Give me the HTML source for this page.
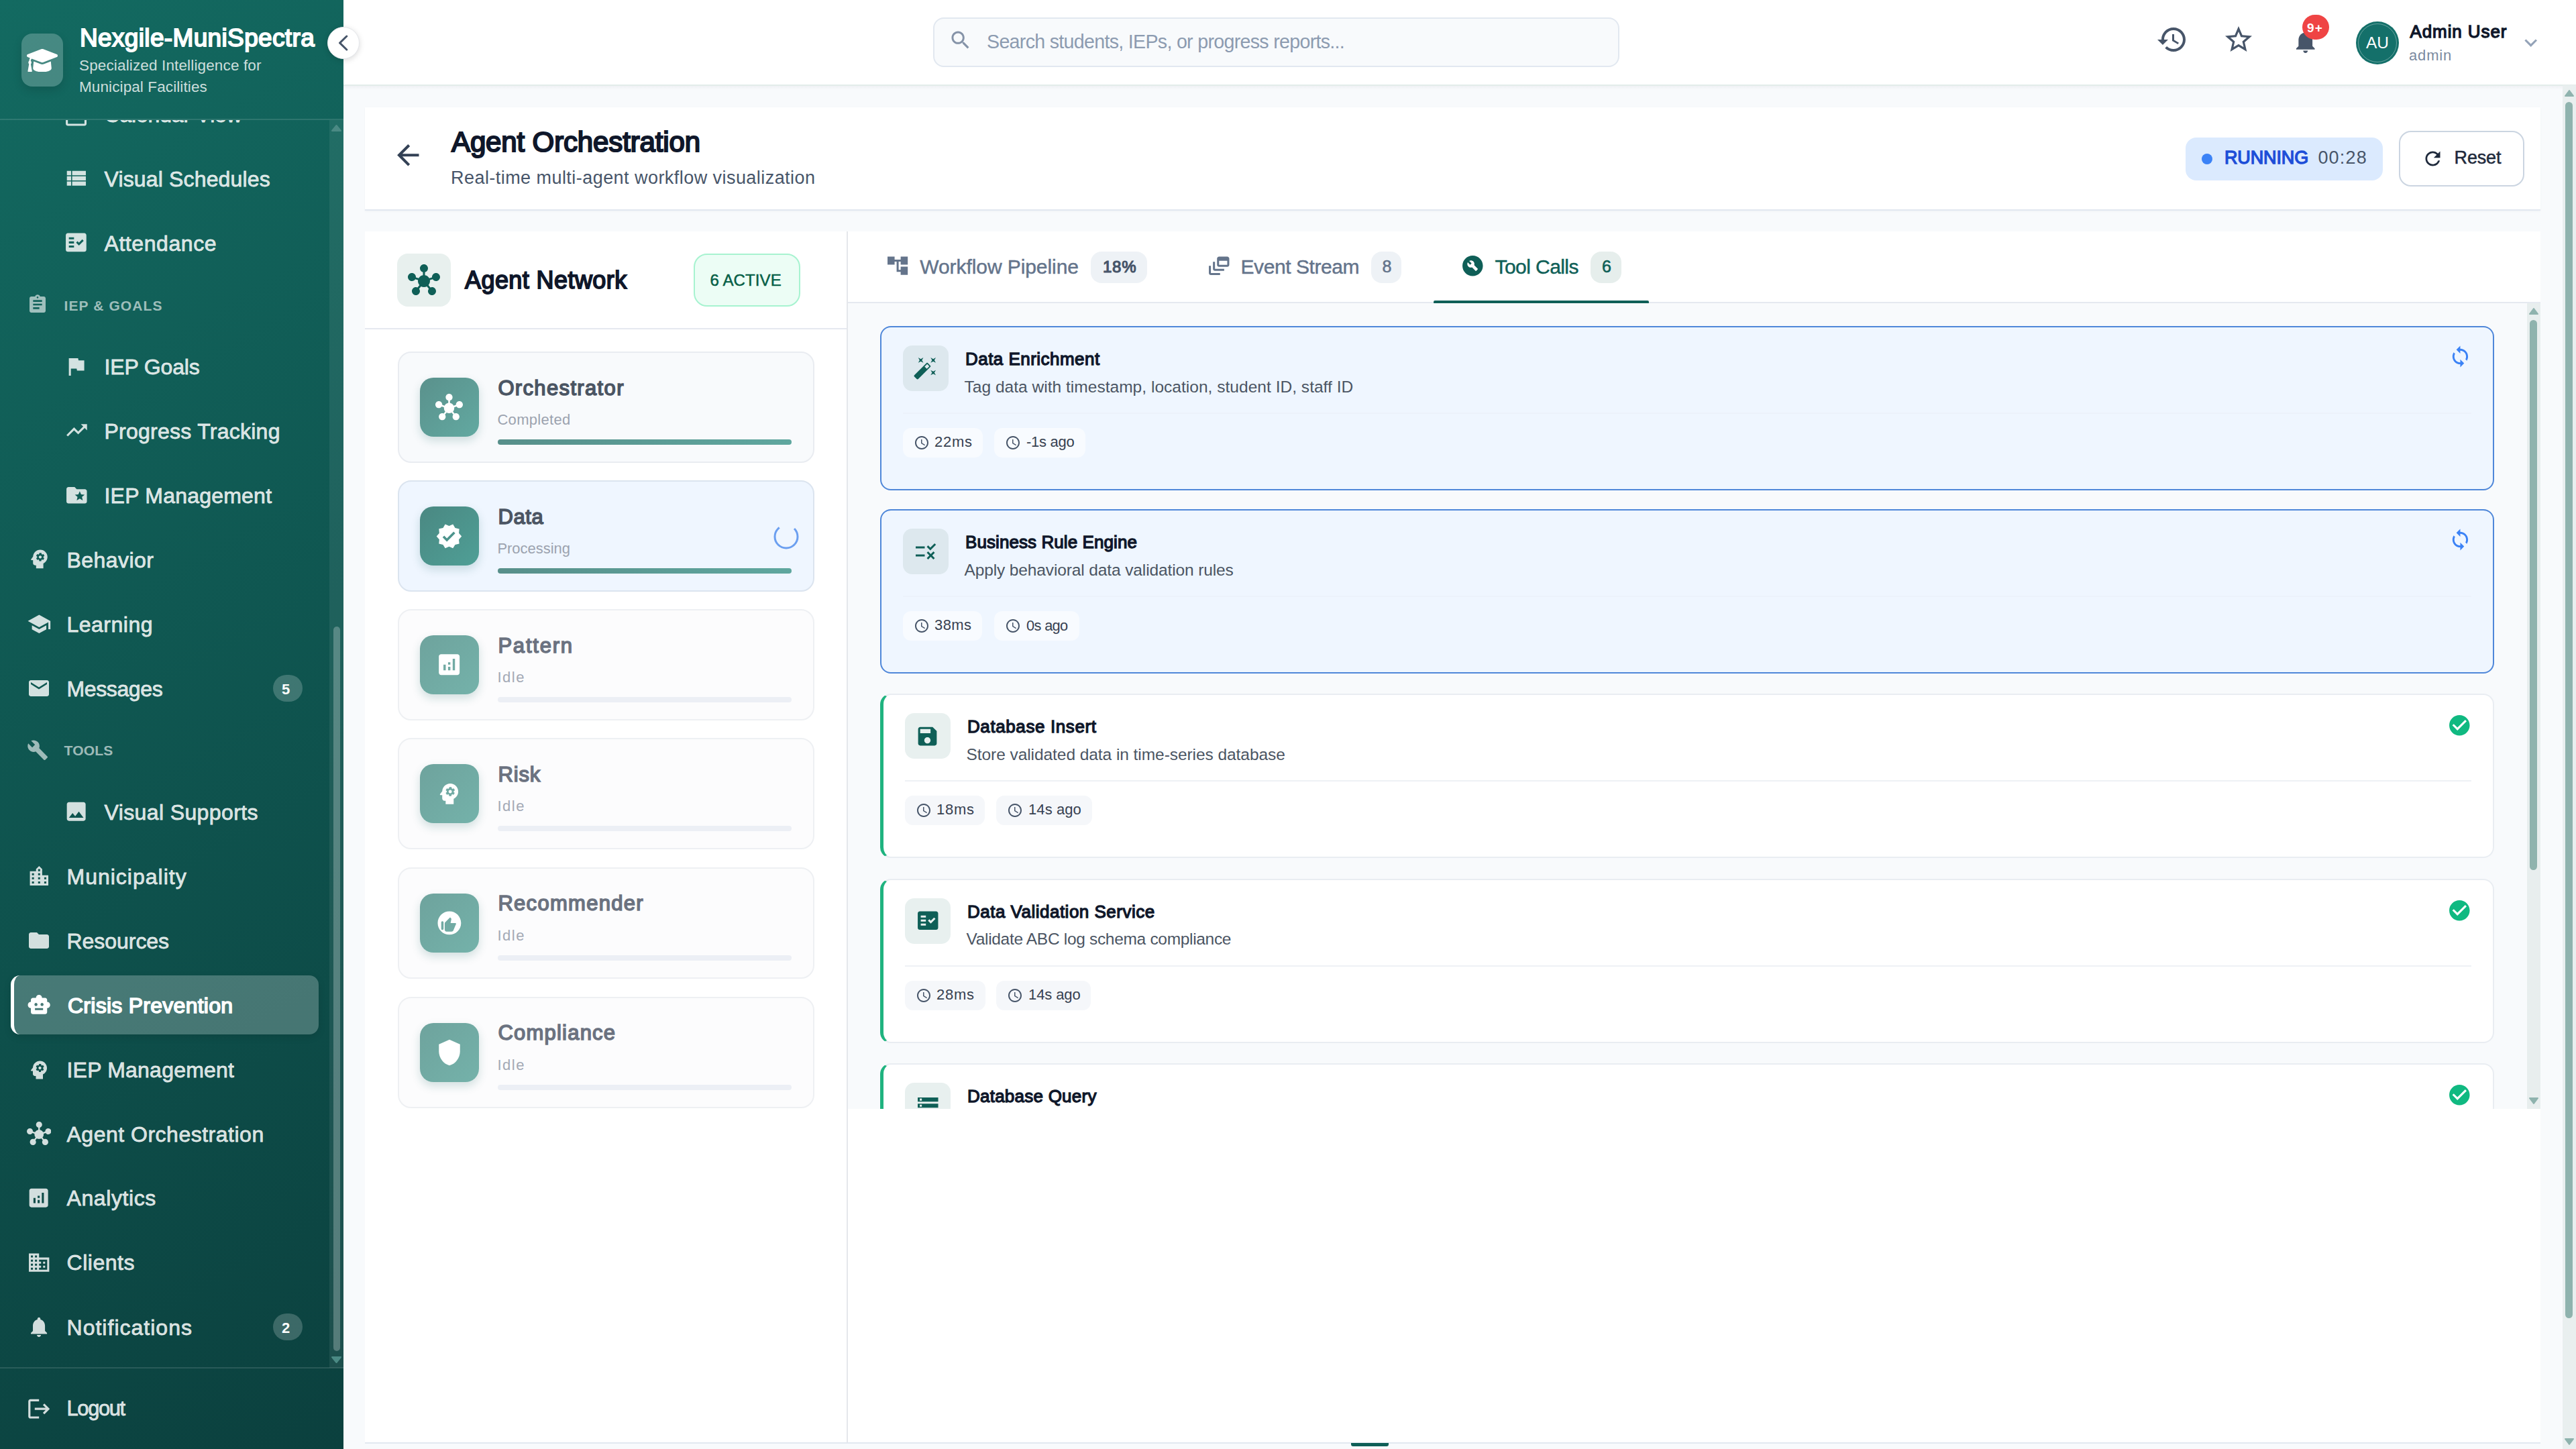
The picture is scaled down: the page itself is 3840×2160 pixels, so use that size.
<!DOCTYPE html>
<html><head><meta charset="utf-8"><title>Agent Orchestration</title>
<style>
html,body{margin:0;padding:0;width:3840px;height:2160px;overflow:hidden;background:#f8fafc;font-family:"Liberation Sans", sans-serif;}
*{font-family:"Liberation Sans", sans-serif;}
</style></head><body>
<div style="position:absolute;left:0.0px;top:0.0px;width:512.0px;height:2160.0px;background:linear-gradient(150deg,#136a61 0%,#0b403e 100%);"></div>
<div style="position:absolute;left:0.0px;top:177.0px;width:512.0px;height:2.0px;background:rgba(255,255,255,0.12);"></div>
<div style="position:absolute;left:32.0px;top:50.0px;width:62.0px;height:79.0px;background:rgba(255,255,255,0.22);border-radius:16px;box-shadow:0 6px 14px rgba(0,0,0,0.12);"></div>
<svg style="position:absolute;left:40px;top:72.5px" width="46" height="34.5" viewBox="0 64 640 384" preserveAspectRatio="none"><path fill="#ffffff" d="M622.34 153.2L343.4 67.5c-15.2-4.67-31.6-4.67-46.79 0L17.66 153.2c-23.54 7.23-23.54 38.36 0 45.59l48.63 14.94c-10.67 13.19-17.230 29.28-17.88 46.9C38.78 266.15 32 276.11 32 288c0 10.780 5.68 19.85 13.86 25.65L20.33 428.53C18.11 438.52 25.71 448 35.94 448h56.11c10.24 0 17.84-9.48 15.62-19.47L82.14 313.65C90.32 307.85 96 298.78 96 288c0-11.57-6.47-21.25-15.66-26.87.76-15.020 8.44-28.3 20.69-36.72L296.6 284.5c9.06 2.78 26.44 6.25 46.79 0l278.95-85.7c23.55-7.24 23.55-38.36 0-45.6zM352.79 315.09c-28.53 8.76-52.84 3.92-65.59 0l-145.02-44.55L128 384c0 35.35 85.96 64 192 64s192-28.65 192-64l-14.18-113.47-145.03 44.560z"/></svg>
<span id="t1" style="position:absolute;left:119.0px;top:38.2px;font-size:37.00px;line-height:37.00px;font-weight:400;color:#ffffff;white-space:nowrap;letter-spacing:0.350px;-webkit-text-stroke:1.85px #ffffff;">Nexgile-MuniSpectra</span>
<span id="t2" style="position:absolute;left:118.0px;top:86.9px;font-size:22.50px;line-height:22.50px;font-weight:400;color:rgba(255,255,255,0.8);white-space:nowrap;letter-spacing:0.142px;">Specialized Intelligence for</span>
<span id="t3" style="position:absolute;left:118.0px;top:118.6px;font-size:22.50px;line-height:22.50px;font-weight:400;color:rgba(255,255,255,0.8);white-space:nowrap;letter-spacing:0.102px;">Municipal Facilities</span>
<div style="position:absolute;left:0;top:179px;width:512px;height:1860px;overflow:hidden;">
<span id="t4" style="position:absolute;left:155.5px;top:-23.8px;font-size:32.00px;line-height:32.00px;font-weight:400;color:rgba(255,255,255,0.82);white-space:nowrap;letter-spacing:-0.185px;-webkit-text-stroke:0.8px rgba(255,255,255,0.82);">Calendar View</span>
<svg style="position:absolute;left:95.2px;top:-27.5px;" width="37.1" height="37.1" viewBox="0 0 24 24"><path fill="rgba(255,255,255,0.82)" d="M20 3h-1V1h-2v2H7V1H5v2H4c-1.1 0-2 .9-2 2v16c0 1.1.9 2 2 2h16c1.1 0 2-.9 2-2V5c0-1.1-.9-2-2-2zm0 18H4V8h16v13z"/></svg>
<span id="t5" style="position:absolute;left:155.5px;top:72.2px;font-size:32.00px;line-height:32.00px;font-weight:400;color:rgba(255,255,255,0.82);white-space:nowrap;letter-spacing:0.153px;-webkit-text-stroke:0.8px rgba(255,255,255,0.82);">Visual Schedules</span>
<svg style="position:absolute;left:95.1px;top:68.1px;" width="37.7" height="37.7" viewBox="0 0 24 24"><path fill="rgba(255,255,255,0.82)" d="M3 14h4v-4H3v4zm0 5h4v-4H3v4zM3 9h4V5H3v4zm5 5h13v-4H8v4zm0 5h13v-4H8v4zM8 5v4h13V5H8z"/></svg>
<span id="t6" style="position:absolute;left:155.5px;top:168.3px;font-size:32.00px;line-height:32.00px;font-weight:400;color:rgba(255,255,255,0.82);white-space:nowrap;letter-spacing:0.566px;-webkit-text-stroke:0.8px rgba(255,255,255,0.82);">Attendance</span>
<svg style="position:absolute;left:95.4px;top:164.4px;" width="36.8" height="36.8" viewBox="0 0 24 24"><path fill="rgba(255,255,255,0.82)" d="M20 3H4c-1.1 0-2 .9-2 2v14c0 1.1.9 2 2 2h16c1.1 0 2-.9 2-2V5c0-1.1-.9-2-2-2zM10 17H5v-2h5v2zm0-4H5v-2h5v2zm0-4H5V7h5v2zm4.82 6L12 12.16l1.41-1.41 1.41 1.42L17.99 9l1.42 1.42L14.82 15z"/></svg>
<span id="t7" style="position:absolute;left:95.5px;top:265.7px;font-size:21.00px;line-height:21.00px;font-weight:700;color:rgba(255,255,255,0.6);white-space:nowrap;letter-spacing:1.096px;">IEP &amp; GOALS</span>
<svg style="position:absolute;left:40.0px;top:259.4px;" width="32.0" height="32.0" viewBox="0 0 24 24"><path fill="rgba(255,255,255,0.6)" d="M19 3h-4.18C14.4 1.84 13.3 1 12 1c-1.3 0-2.4.84-2.82 2H5c-1.1 0-2 .9-2 2v14c0 1.1.9 2 2 2h14c1.1 0 2-.9 2-2V5c0-1.1-.9-2-2-2zm-7 0c.55 0 1 .45 1 1s-.45 1-1 1-1-.45-1-1 .45-1 1-1zm2 14H7v-2h7v2zm3-4H7v-2h10v2zm0-4H7V7h10v2z"/></svg>
<span id="t8" style="position:absolute;left:155.5px;top:351.9px;font-size:32.00px;line-height:32.00px;font-weight:400;color:rgba(255,255,255,0.82);white-space:nowrap;letter-spacing:-0.145px;-webkit-text-stroke:0.8px rgba(255,255,255,0.82);">IEP Goals</span>
<svg style="position:absolute;left:95.4px;top:348.9px;" width="36.7" height="36.7" viewBox="0 0 24 24"><path fill="rgba(255,255,255,0.82)" d="M14.4 6L14 4H5v17h2v-7h5.6l.4 2h7V6z"/></svg>
<span id="t9" style="position:absolute;left:155.5px;top:447.9px;font-size:32.00px;line-height:32.00px;font-weight:400;color:rgba(255,255,255,0.82);white-space:nowrap;letter-spacing:0.253px;-webkit-text-stroke:0.8px rgba(255,255,255,0.82);">Progress Tracking</span>
<svg style="position:absolute;left:95.8px;top:444.4px;" width="36.8" height="36.8" viewBox="0 0 24 24"><path fill="rgba(255,255,255,0.82)" d="M16 6l2.29 2.29-4.88 4.88-4-4L2 16.59 3.41 18l6-6 4 4 6.3-6.29L22 12V6z"/></svg>
<span id="t10" style="position:absolute;left:155.5px;top:544.4px;font-size:32.00px;line-height:32.00px;font-weight:400;color:rgba(255,255,255,0.82);white-space:nowrap;letter-spacing:0.219px;-webkit-text-stroke:0.8px rgba(255,255,255,0.82);">IEP Management</span>
<svg style="position:absolute;left:95.9px;top:540.7px;" width="36.6" height="36.6" viewBox="0 0 24 24"><path fill="rgba(255,255,255,0.82)" d="M20 6h-8l-2-2H4c-1.1 0-1.99.9-1.99 2L2 18c0 1.1.9 2 2 2h16c1.1 0 2-.9 2-2V8c0-1.1-.9-2-2-2zm-2.06 11L15 15.28 12.06 17l.78-3.33-2.59-2.24 3.41-.29L15 8l1.34 3.14 3.41.29-2.59 2.24.78 3.33z"/></svg>
<span id="t11" style="position:absolute;left:99.5px;top:639.9px;font-size:32.00px;line-height:32.00px;font-weight:400;color:rgba(255,255,255,0.82);white-space:nowrap;letter-spacing:0.437px;-webkit-text-stroke:0.8px rgba(255,255,255,0.82);">Behavior</span>
<svg style="position:absolute;left:39.5px;top:636.4px;" width="36.9" height="36.9" viewBox="0 0 24 24"><path fill="rgba(255,255,255,0.82)" d="M13 8.57c-.79 0-1.43.64-1.43 1.43s.64 1.43 1.43 1.43 1.43-.64 1.43-1.43-.64-1.43-1.43-1.43zM13 3C9.25 3 6.2 5.94 6.02 9.64L4.1 12.2c-.25.33-.01.8.4.8H6v3c0 1.1.9 2 2 2h1v3h7v-4.68c2.36-1.12 4-3.53 4-6.32 0-3.87-3.13-7-7-7zm3 7c0 .13-.01.26-.02.39l.83.66c.08.06.1.16.05.25l-.8 1.39c-.05.09-.16.12-.24.09l-.99-.4c-.21.16-.43.29-.67.39L14 13.83c-.01.1-.1.17-.2.17h-1.6c-.1 0-.18-.07-.2-.17l-.15-1.06c-.25-.1-.47-.23-.68-.39l-.99.4c-.09.03-.2 0-.25-.09l-.8-1.39c-.05-.08-.03-.19.05-.25l.84-.66c-.01-.13-.02-.26-.02-.39s.02-.27.04-.39l-.85-.66c-.08-.06-.1-.16-.05-.26l.8-1.38c.05-.09.15-.12.24-.09l1 .4c.2-.15.43-.29.67-.39L12.17 6.2c.01-.12.1-.2.2-.2h1.6c.1 0 .18.07.19.17l.15 1.06c.24.1.46.23.67.39l1-.4c.09-.03.2 0 .24.09l.8 1.38c.05.09.03.2-.05.26l-.85.66c.03.12.04.25.04.39z"/></svg>
<span id="t12" style="position:absolute;left:99.5px;top:735.9px;font-size:32.00px;line-height:32.00px;font-weight:400;color:rgba(255,255,255,0.82);white-space:nowrap;letter-spacing:0.493px;-webkit-text-stroke:0.8px rgba(255,255,255,0.82);">Learning</span>
<svg style="position:absolute;left:40.1px;top:732.9px;" width="36.7" height="36.7" viewBox="0 0 24 24"><path fill="rgba(255,255,255,0.82)" d="M5 13.18v4L12 21l7-3.82v-4L12 17l-7-3.82zM12 3L1 9l11 6 9-4.91V17h2V9L12 3z"/></svg>
<span id="t13" style="position:absolute;left:99.5px;top:831.5px;font-size:32.00px;line-height:32.00px;font-weight:400;color:rgba(255,255,255,0.82);white-space:nowrap;letter-spacing:-0.378px;-webkit-text-stroke:0.8px rgba(255,255,255,0.82);">Messages</span>
<svg style="position:absolute;left:40.0px;top:829.0px;" width="36.0" height="36.0" viewBox="0 0 24 24"><path fill="rgba(255,255,255,0.82)" d="M20 4H4c-1.1 0-1.99.9-1.99 2L2 18c0 1.1.9 2 2 2h16c1.1 0 2-.9 2-2V6c0-1.1-.9-2-2-2zm0 4l-8 5-8-5V6l8 5 8-5v2z"/></svg>
<div style="position:absolute;left:406.6px;top:827.0px;width:44.4px;height:40.0px;background:rgba(255,255,255,0.2);border-radius:20px;"></div>
<span id="t14" style="position:absolute;left:420.0px;top:838.4px;font-size:22.00px;line-height:22.00px;font-weight:700;color:#ffffff;white-space:nowrap;letter-spacing:0.000px;">5</span>
<span id="t15" style="position:absolute;left:95.5px;top:929.2px;font-size:21.00px;line-height:21.00px;font-weight:700;color:rgba(255,255,255,0.6);white-space:nowrap;letter-spacing:0.214px;">TOOLS</span>
<svg style="position:absolute;left:39.6px;top:922.9px;" width="32.4" height="32.4" viewBox="0 0 24 24"><path fill="rgba(255,255,255,0.6)" d="M22.7 19l-9.1-9.1c.9-2.3.4-5-1.5-6.9-2-2-5-2.4-7.4-1.3L9 6 6 9 1.6 4.7C.4 7.1.9 10.1 2.9 12.1c1.9 1.9 4.6 2.4 6.9 1.5l9.1 9.1c.4.4 1 .4 1.4 0l2.3-2.3c.5-.4.5-1.1.1-1.4z"/></svg>
<span id="t16" style="position:absolute;left:155.5px;top:1016.3px;font-size:32.00px;line-height:32.00px;font-weight:400;color:rgba(255,255,255,0.82);white-space:nowrap;letter-spacing:0.390px;-webkit-text-stroke:0.8px rgba(255,255,255,0.82);">Visual Supports</span>
<svg style="position:absolute;left:95.2px;top:1012.3px;" width="37.3" height="37.3" viewBox="0 0 24 24"><path fill="rgba(255,255,255,0.82)" d="M21 19V5c0-1.1-.9-2-2-2H5c-1.1 0-2 .9-2 2v14c0 1.1.9 2 2 2h14c1.1 0 2-.9 2-2zM8.5 13.5l2.5 3.01L14.5 12l4.5 6H5l3.5-4.5z"/></svg>
<span id="t17" style="position:absolute;left:99.5px;top:1111.9px;font-size:32.00px;line-height:32.00px;font-weight:400;color:rgba(255,255,255,0.82);white-space:nowrap;letter-spacing:1.003px;-webkit-text-stroke:0.8px rgba(255,255,255,0.82);">Municipality</span>
<svg style="position:absolute;left:39.8px;top:1108.9px;" width="36.6" height="36.6" viewBox="0 0 24 24"><path fill="rgba(255,255,255,0.82)" d="M15 11V5l-3-3-3 3v2H3v14h18V11h-6zm-8 8H5v-2h2v2zm0-4H5v-2h2v2zm0-4H5V9h2v2zm6 8h-2v-2h2v2zm0-4h-2v-2h2v2zm0-4h-2V9h2v2zm0-4h-2V5h2v2zm6 12h-2v-2h2v2zm0-4h-2v-2h2v2z"/></svg>
<span id="t18" style="position:absolute;left:99.5px;top:1207.9px;font-size:32.00px;line-height:32.00px;font-weight:400;color:rgba(255,255,255,0.82);white-space:nowrap;letter-spacing:-0.044px;-webkit-text-stroke:0.8px rgba(255,255,255,0.82);">Resources</span>
<svg style="position:absolute;left:40.0px;top:1205.0px;" width="36.0" height="36.0" viewBox="0 0 24 24"><path fill="rgba(255,255,255,0.82)" d="M10 4H4c-1.1 0-1.99.9-1.99 2L2 18c0 1.1.9 2 2 2h16c1.1 0 2-.9 2-2V8c0-1.1-.9-2-2-2h-8l-2-2z"/></svg>
<div style="position:absolute;left:16.0px;top:1275.0px;width:458.5px;height:88.0px;background:rgba(255,255,255,0.24);border-radius:14px;border-left:5px solid #ffffff;box-sizing:border-box;box-shadow:0 4px 12px rgba(0,0,0,0.1);"></div>
<span id="t19" style="position:absolute;left:101.0px;top:1304.2px;font-size:32.00px;line-height:32.00px;font-weight:400;color:#ffffff;white-space:nowrap;letter-spacing:0.265px;-webkit-text-stroke:1.6px #ffffff;">Crisis Prevention</span>
<svg style="position:absolute;left:39.6px;top:1301.0px;" width="36.3" height="36.3" viewBox="0 0 24 24"><path fill="#ffffff" d="M20 9V7c0-1.1-.9-2-2-2h-3c0-1.66-1.34-3-3-3S9 3.34 9 5H6c-1.1 0-2 .9-2 2v2c-1.66 0-3 1.34-3 3s1.34 3 3 3v4c0 1.1.9 2 2 2h12c1.1 0 2-.9 2-2v-4c1.66 0 3-1.34 3-3s-1.34-3-3-3zM7.5 11.5c0-.83.67-1.5 1.5-1.5s1.5.67 1.5 1.5S9.83 13 9 13s-1.5-.67-1.5-1.5zM16 17H8v-2h8v2zm-1-4c-.83 0-1.5-.67-1.5-1.5S14.17 10 15 10s1.5.67 1.5 1.5S15.83 13 15 13z"/></svg>
<span id="t20" style="position:absolute;left:99.5px;top:1399.9px;font-size:32.00px;line-height:32.00px;font-weight:400;color:rgba(255,255,255,0.82);white-space:nowrap;letter-spacing:0.211px;-webkit-text-stroke:0.8px rgba(255,255,255,0.82);">IEP Management</span>
<svg style="position:absolute;left:40.0px;top:1397.5px;" width="36.0" height="36.0" viewBox="0 0 24 24"><path fill="rgba(255,255,255,0.82)" d="M13 8.57c-.79 0-1.43.64-1.43 1.43s.64 1.43 1.43 1.43 1.43-.64 1.43-1.43-.64-1.43-1.43-1.43zM13 3C9.25 3 6.2 5.94 6.02 9.64L4.1 12.2c-.25.33-.01.8.4.8H6v3c0 1.1.9 2 2 2h1v3h7v-4.68c2.36-1.12 4-3.53 4-6.32 0-3.87-3.13-7-7-7zm3 7c0 .13-.01.26-.02.39l.83.66c.08.06.1.16.05.25l-.8 1.39c-.05.09-.16.12-.24.09l-.99-.4c-.21.16-.43.29-.67.39L14 13.83c-.01.1-.1.17-.2.17h-1.6c-.1 0-.18-.07-.2-.17l-.15-1.06c-.25-.1-.47-.23-.68-.39l-.99.4c-.09.03-.2 0-.25-.09l-.8-1.39c-.05-.08-.03-.19.05-.25l.84-.66c-.01-.13-.02-.26-.02-.39s.02-.27.04-.39l-.85-.66c-.08-.06-.1-.16-.05-.26l.8-1.38c.05-.09.15-.12.24-.09l1 .4c.2-.15.43-.29.67-.39L12.17 6.2c.01-.12.1-.2.2-.2h1.6c.1 0 .18.07.19.17l.15 1.06c.24.1.46.23.67.39l1-.4c.09-.03.2 0 .24.09l.8 1.38c.05.09.03.2-.05.26l-.85.66c.03.12.04.25.04.39z"/></svg>
<span id="t21" style="position:absolute;left:99.5px;top:1495.9px;font-size:32.00px;line-height:32.00px;font-weight:400;color:rgba(255,255,255,0.82);white-space:nowrap;letter-spacing:0.506px;-webkit-text-stroke:0.8px rgba(255,255,255,0.82);">Agent Orchestration</span>
<svg style="position:absolute;left:39.8px;top:1493.0px;" width="36.5" height="36.5" viewBox="0 0 24 24"><path fill="rgba(255,255,255,0.82)" d="M8.4 18.2c.38.5.6 1.12.6 1.8 0 1.66-1.34 3-3 3s-3-1.34-3-3 1.34-3 3-3c.44 0 .85.09 1.23.26l1.41-1.77c-.92-1.03-1.29-2.39-1.09-3.69l-2.03-.68c-.54.83-1.46 1.38-2.52 1.38-1.66 0-3-1.34-3-3s1.34-3 3-3 3 1.34 3 3c0 .07 0 .14-.01.21l2.03.68c.64-1.21 1.82-2.09 3.22-2.32V5.91C9.96 5.57 9 4.4 9 3c0-1.66 1.34-3 3-3s3 1.34 3 3c0 1.4-.96 2.57-2.25 2.91v2.16c1.4.23 2.58 1.11 3.22 2.32l2.03-.68c-.01-.07-.01-.14-.01-.21 0-1.66 1.34-3 3-3s3 1.34 3 3-1.34 3-3 3c-1.06 0-1.98-.55-2.52-1.37l-2.03.68c.2 1.29-.16 2.65-1.09 3.69l1.41 1.77c.38-.17.79-.26 1.23-.26 1.66 0 3 1.34 3 3s-1.34 3-3 3-3-1.34-3-3c0-.68.22-1.3.6-1.8l-1.41-1.77c-1.35.75-3.01.76-4.37 0L8.4 18.2z"/></svg>
<span id="t22" style="position:absolute;left:99.5px;top:1590.9px;font-size:32.00px;line-height:32.00px;font-weight:400;color:rgba(255,255,255,0.82);white-space:nowrap;letter-spacing:0.594px;-webkit-text-stroke:0.8px rgba(255,255,255,0.82);">Analytics</span>
<svg style="position:absolute;left:39.3px;top:1588.3px;" width="37.3" height="37.3" viewBox="0 0 24 24"><path fill="rgba(255,255,255,0.82)" d="M19 3H5c-1.1 0-2 .9-2 2v14c0 1.1.9 2 2 2h14c1.1 0 2-.9 2-2V5c0-1.1-.9-2-2-2zM9 17H7v-5h2v5zm4 0h-2v-3h2v3zm0-5h-2v-2h2v2zm4 5h-2V7h2v10z"/></svg>
<span id="t23" style="position:absolute;left:99.5px;top:1686.9px;font-size:32.00px;line-height:32.00px;font-weight:400;color:rgba(255,255,255,0.82);white-space:nowrap;letter-spacing:0.531px;-webkit-text-stroke:0.8px rgba(255,255,255,0.82);">Clients</span>
<svg style="position:absolute;left:40.1px;top:1685.1px;" width="36.4" height="36.4" viewBox="0 0 24 24"><path fill="rgba(255,255,255,0.82)" d="M12 7V3H2v18h20V7H12zM6 19H4v-2h2v2zm0-4H4v-2h2v2zm0-4H4V9h2v2zm0-4H4V5h2v2zm4 12H8v-2h2v2zm0-4H8v-2h2v2zm0-4H8V9h2v2zm0-4H8V5h2v2zm10 12h-8v-2h2v-2h-2v-2h2v-2h-2V9h8v10zm-2-8h-2v2h2v-2zm0 4h-2v2h2v-2z"/></svg>
<span id="t24" style="position:absolute;left:99.5px;top:1783.9px;font-size:32.00px;line-height:32.00px;font-weight:400;color:rgba(255,255,255,0.82);white-space:nowrap;letter-spacing:1.017px;-webkit-text-stroke:0.8px rgba(255,255,255,0.82);">Notifications</span>
<svg style="position:absolute;left:40.0px;top:1780.9px;" width="36.1" height="36.1" viewBox="0 0 24 24"><path fill="rgba(255,255,255,0.82)" d="M12 22c1.1 0 2-.9 2-2h-4c0 1.1.89 2 2 2zm6-6v-5c0-3.07-1.64-5.64-4.5-6.32V4c0-.83-.67-1.5-1.5-1.5s-1.5.67-1.5 1.5v.68C7.63 5.36 6 7.92 6 11v5l-2 2v1h16v-1l-2-2z"/></svg>
<div style="position:absolute;left:406.6px;top:1779.0px;width:44.4px;height:40.0px;background:rgba(255,255,255,0.2);border-radius:20px;"></div>
<span id="t25" style="position:absolute;left:420.0px;top:1790.4px;font-size:22.00px;line-height:22.00px;font-weight:700;color:#ffffff;white-space:nowrap;letter-spacing:0.000px;">2</span>
<div style="position:absolute;left:491.0px;top:0.0px;width:21.0px;height:1860.0px;background:rgba(255,255,255,0.07);"></div>
<div style="position:absolute;left:496.5px;top:754.5px;width:10.5px;height:1080.0px;background:rgba(255,255,255,0.25);border-radius:6px;"></div>
<svg style="position:absolute;left:493px;top:6px" width="17" height="12" viewBox="0 0 17 12"><path d="M8.5 2 L15 10 L2 10 Z" fill="#4b8a84" stroke="#4b8a84" stroke-width="2" stroke-linejoin="round"/></svg>
<svg style="position:absolute;left:493px;top:1842px" width="17" height="12" viewBox="0 0 17 12"><path d="M2 2 L15 2 L8.5 10 Z" fill="#4b8a84" stroke="#4b8a84" stroke-width="2" stroke-linejoin="round"/></svg>
</div>
<div style="position:absolute;left:0.0px;top:2038.0px;width:512.0px;height:2.0px;background:rgba(255,255,255,0.12);"></div>
<span id="t26" style="position:absolute;left:99.5px;top:2084.8px;font-size:30.90px;line-height:30.90px;font-weight:400;color:rgba(255,255,255,0.82);white-space:nowrap;letter-spacing:-1.355px;-webkit-text-stroke:0.8px rgba(255,255,255,0.82);">Logout</span>
<svg style="position:absolute;left:38.8px;top:2081.0px;" width="38.4" height="38.4" viewBox="0 0 24 24"><path fill="rgba(255,255,255,0.82)" d="M17 7l-1.41 1.41L18.17 11H8v2h10.17l-2.58 2.58L17 17l5-5zM4 5h8V3H4c-1.1 0-2 .9-2 2v14c0 1.1.9 2 2 2h8v-2H4V5z"/></svg>
<div style="position:absolute;left:512.0px;top:0.0px;width:3328.0px;height:126.0px;background:#ffffff;"></div>
<div style="position:absolute;left:512.0px;top:126.0px;width:3328.0px;height:2.0px;background:#e3ecea;"></div>
<div style="position:absolute;left:512.0px;top:128.0px;width:3308.0px;height:6.0px;background:linear-gradient(180deg,rgba(15,23,42,0.04),rgba(15,23,42,0));"></div>
<div style="position:absolute;left:488.0px;top:40.0px;width:48.0px;height:48.0px;background:#ffffff;border-radius:50%;box-shadow:0 2px 8px rgba(0,0,0,0.15);border:1px solid #e5e7eb;box-sizing:border-box;"></div>
<svg style="position:absolute;left:500px;top:50px" width="24" height="28" viewBox="0 0 24 28"><polyline points="16.8,4 6.5,14 16.8,24" fill="none" stroke="#475569" stroke-width="3" stroke-linecap="round" stroke-linejoin="round"/></svg>
<div style="position:absolute;left:1391.0px;top:26.0px;width:1023.0px;height:74.0px;background:#f8fafc;border:2px solid #e2e8f0;border-radius:16px;box-sizing:border-box;"></div>
<svg style="position:absolute;left:1414.0px;top:42.3px;" width="35.7" height="35.7" viewBox="0 0 24 24"><path fill="#8593a8" d="M15.5 14h-.79l-.28-.27C15.41 12.59 16 11.11 16 9.5 16 5.91 13.09 3 9.5 3S3 5.91 3 9.5 5.91 16 9.5 16c1.61 0 3.09-.59 4.23-1.57l.27.28v.79l5 4.99L20.49 19l-4.99-5zm-6 0C7.01 14 5 11.99 5 9.5S7.01 5 9.5 5 14 7.01 14 9.5 11.99 14 9.5 14z"/></svg>
<span id="t27" style="position:absolute;left:1471.0px;top:48.0px;font-size:28.59px;line-height:28.59px;font-weight:400;color:#8c9bb0;white-space:nowrap;letter-spacing:-0.684px;">Search students, IEPs, or progress reports...</span>
<svg style="position:absolute;left:3214.0px;top:35.0px;" width="48.0" height="48.0" viewBox="0 0 24 24"><path fill="#475569" d="M13 3c-4.97 0-9 4.03-9 9H1l3.89 3.89.07.14L9 12H6c0-3.87 3.13-7 7-7s7 3.13 7 7-3.13 7-7 7c-1.93 0-3.68-.79-4.94-2.06l-1.42 1.42C8.27 19.99 10.51 21 13 21c4.97 0 9-4.03 9-9s-4.03-9-9-9zm-1 5v5l4.28 2.54.72-1.21-3.5-2.08V8H12z"/></svg>
<svg style="position:absolute;left:3313.0px;top:35.3px;" width="48.0" height="48.0" viewBox="0 0 24 24"><path fill="#475569" d="M22 9.24l-7.19-.62L12 2 9.19 8.63 2 9.24l5.46 4.73L5.82 21 12 17.27 18.18 21l-1.63-7.03L22 9.24zM12 15.4l-3.76 2.27 1-4.28-3.32-2.88 4.38-.38L12 6.1l1.71 4.04 4.38.38-3.32 2.88 1 4.28L12 15.4z"/></svg>
<svg style="position:absolute;left:3415.5px;top:40.7px;" width="41.5" height="41.5" viewBox="0 0 24 24"><path fill="#475569" d="M12 22c1.1 0 2-.9 2-2h-4c0 1.1.89 2 2 2zm6-6v-5c0-3.07-1.64-5.64-4.5-6.32V4c0-.83-.67-1.5-1.5-1.5s-1.5.67-1.5 1.5v.68C7.63 5.36 6 7.92 6 11v5l-2 2v1h16v-1l-2-2z"/></svg>
<div style="position:absolute;left:3432.0px;top:22.0px;width:40.0px;height:37.0px;background:#ef4444;border-radius:20px;"></div>
<span id="t28" style="position:absolute;left:3439.0px;top:31.6px;font-size:19.00px;line-height:19.00px;font-weight:700;color:#ffffff;white-space:nowrap;letter-spacing:1.233px;">9+</span>
<div style="position:absolute;left:3512.0px;top:32.0px;width:64.0px;height:64.0px;background:#14706a;border-radius:50%;"></div>
<div style="position:absolute;left:3515.0px;top:35.0px;width:58.0px;height:58.0px;border:1.5px solid rgba(255,255,255,0.35);border-radius:50%;box-sizing:border-box;"></div>
<span id="t29" style="position:absolute;left:3527.0px;top:52.2px;font-size:24.50px;line-height:24.50px;font-weight:400;color:#ffffff;white-space:nowrap;letter-spacing:0.000px;">AU</span>
<span id="t30" style="position:absolute;left:3592.5px;top:34.0px;font-size:26.00px;line-height:26.00px;font-weight:400;color:#0f172a;white-space:nowrap;letter-spacing:0.905px;-webkit-text-stroke:1.3px #0f172a;">Admin User</span>
<span id="t31" style="position:absolute;left:3591.0px;top:72.4px;font-size:22.00px;line-height:22.00px;font-weight:400;color:#7b8aa0;white-space:nowrap;letter-spacing:0.829px;">admin</span>
<svg style="position:absolute;left:3753.7px;top:45.1px;" width="37.4" height="37.4" viewBox="0 0 24 24"><path fill="#94a3b8" d="M16.59 8.59L12 13.17 7.41 8.59 6 10l6 6 6-6z"/></svg>
<div style="position:absolute;left:3820.0px;top:127.0px;width:20.0px;height:2033.0px;background:#e9efef;"></div>
<div style="position:absolute;left:3824.0px;top:152.0px;width:11.0px;height:1813.0px;background:#8fb3ae;border-radius:6px;"></div>
<svg style="position:absolute;left:3822px;top:133px" width="16" height="12" viewBox="0 0 16 12"><path d="M8 2 L14 10 L2 10 Z" fill="#8fb3ae" stroke="#8fb3ae" stroke-width="2" stroke-linejoin="round"/></svg>
<svg style="position:absolute;left:3822px;top:2143px" width="16" height="12" viewBox="0 0 16 12"><path d="M2 2 L14 2 L8 10 Z" fill="#8fb3ae" stroke="#8fb3ae" stroke-width="2" stroke-linejoin="round"/></svg>
<div style="position:absolute;left:544.0px;top:160.0px;width:3243.0px;height:154.0px;background:#ffffff;border-bottom:2px solid #e2e8f0;box-sizing:border-box;box-shadow:0 1px 3px rgba(15,23,42,0.04);"></div>
<svg style="position:absolute;left:583.9px;top:207.2px;" width="48.6" height="48.6" viewBox="0 0 24 24"><path fill="#334155" d="M20 11H7.83l5.59-5.59L12 4l-8 8 8 8 1.41-1.41L7.83 13H20v-2z"/></svg>
<span id="t32" style="position:absolute;left:673.0px;top:191.4px;font-size:42.00px;line-height:42.00px;font-weight:400;color:#0f172a;white-space:nowrap;letter-spacing:-0.137px;-webkit-text-stroke:2.1px #0f172a;">Agent Orchestration</span>
<span id="t33" style="position:absolute;left:672.0px;top:252.4px;font-size:27.00px;line-height:27.00px;font-weight:400;color:#475569;white-space:nowrap;letter-spacing:0.449px;">Real-time multi-agent workflow visualization</span>
<div style="position:absolute;left:3258.0px;top:205.0px;width:294.0px;height:64.0px;background:#dbeafe;border-radius:16px;"></div>
<div style="position:absolute;left:3281.5px;top:228.8px;width:16.0px;height:16.0px;background:#3b82f6;border-radius:50%;"></div>
<span id="t34" style="position:absolute;left:3316.0px;top:222.1px;font-size:27.00px;line-height:27.00px;font-weight:400;color:#1d4ed8;white-space:nowrap;letter-spacing:-0.141px;-webkit-text-stroke:1.35px #1d4ed8;">RUNNING</span>
<span id="t35" style="position:absolute;left:3455.4px;top:222.1px;font-size:27.00px;line-height:27.00px;font-weight:400;color:#475569;white-space:nowrap;letter-spacing:1.188px;">00:28</span>
<div style="position:absolute;left:3576.0px;top:195.0px;width:187.0px;height:83.0px;background:#ffffff;border:2px solid #cbd5e1;border-radius:18px;box-sizing:border-box;"></div>
<svg style="position:absolute;left:3609.5px;top:220.4px;" width="33.0" height="33.0" viewBox="0 0 24 24"><path fill="#1e293b" d="M17.65 6.35C16.2 4.9 14.21 4 12 4c-4.42 0-7.99 3.58-7.99 8s3.57 8 7.99 8c3.73 0 6.84-2.55 7.73-6h-2.08c-.82 2.33-3.04 4-5.65 4-3.31 0-6-2.69-6-6s2.69-6 6-6c1.66 0 3.14.69 4.22 1.78L13 11h7V4l-2.35 2.35z"/></svg>
<span id="t36" style="position:absolute;left:3658.6px;top:222.1px;font-size:27.00px;line-height:27.00px;font-weight:400;color:#1e293b;white-space:nowrap;letter-spacing:-0.183px;-webkit-text-stroke:0.5px #1e293b;">Reset</span>
<div style="position:absolute;left:544.0px;top:345.0px;width:3243.0px;height:1807.0px;background:#ffffff;border-bottom:2px solid #e2e8f0;box-sizing:border-box;"></div>
<div style="position:absolute;left:1262.0px;top:345.0px;width:2.0px;height:1805.0px;background:#e5e7eb;"></div>
<div style="position:absolute;left:544.0px;top:489.0px;width:718.0px;height:2.0px;background:#e5e9f0;"></div>
<div style="position:absolute;left:592.0px;top:378.0px;width:80.0px;height:79.0px;background:#e8f0ee;border-radius:16px;"></div>
<svg style="position:absolute;left:608.0px;top:393.8px;" width="48.0" height="48.0" viewBox="0 0 24 24"><path fill="#0f5f57" d="M8.4 18.2c.38.5.6 1.12.6 1.8 0 1.66-1.34 3-3 3s-3-1.34-3-3 1.34-3 3-3c.44 0 .85.09 1.23.26l1.41-1.77c-.92-1.03-1.29-2.39-1.09-3.69l-2.03-.68c-.54.83-1.46 1.38-2.52 1.38-1.66 0-3-1.34-3-3s1.34-3 3-3 3 1.34 3 3c0 .07 0 .14-.01.21l2.03.68c.64-1.21 1.82-2.09 3.22-2.32V5.91C9.96 5.57 9 4.4 9 3c0-1.66 1.34-3 3-3s3 1.34 3 3c0 1.4-.96 2.57-2.25 2.91v2.16c1.4.23 2.58 1.11 3.22 2.32l2.03-.68c-.01-.07-.01-.14-.01-.21 0-1.66 1.34-3 3-3s3 1.34 3 3-1.34 3-3 3c-1.06 0-1.98-.55-2.52-1.37l-2.03.68c.2 1.29-.16 2.65-1.09 3.69l1.41 1.77c.38-.17.79-.26 1.23-.26 1.66 0 3 1.34 3 3s-1.34 3-3 3-3-1.34-3-3c0-.68.22-1.3.6-1.8l-1.41-1.77c-1.35.75-3.01.76-4.37 0L8.4 18.2z"/></svg>
<span id="t37" style="position:absolute;left:693.0px;top:399.8px;font-size:36.00px;line-height:36.00px;font-weight:400;color:#0f172a;white-space:nowrap;letter-spacing:0.424px;-webkit-text-stroke:1.8px #0f172a;">Agent Network</span>
<div style="position:absolute;left:1034.0px;top:378.0px;width:159.0px;height:79.0px;background:#ecfdf5;border:2px solid #a7f3d0;border-radius:20px;box-sizing:border-box;"></div>
<span id="t38" style="position:absolute;left:1058.5px;top:405.7px;font-size:24.00px;line-height:24.00px;font-weight:400;color:#065f46;white-space:nowrap;letter-spacing:0.116px;-webkit-text-stroke:0.5px #065f46;">6 ACTIVE</span>
<div style="position:absolute;left:592.5px;top:524.0px;width:621.5px;height:166.0px;background:#f8fafc;border:2px solid #e9ecf1;border-radius:20px;box-sizing:border-box;"></div>
<div style="position:absolute;left:626.0px;top:563.0px;width:88.0px;height:88.0px;background:linear-gradient(135deg,#5a918c,#62a9a1);border-radius:20px;box-shadow:0 6px 14px rgba(15,95,87,0.18);"></div>
<svg style="position:absolute;left:648.9px;top:587.3px;" width="41.0" height="41.0" viewBox="0 0 24 24"><path fill="#ffffff" d="M8.4 18.2c.38.5.6 1.12.6 1.8 0 1.66-1.34 3-3 3s-3-1.34-3-3 1.34-3 3-3c.44 0 .85.09 1.23.26l1.41-1.77c-.92-1.03-1.29-2.39-1.09-3.69l-2.03-.68c-.54.83-1.46 1.38-2.52 1.38-1.66 0-3-1.34-3-3s1.34-3 3-3 3 1.34 3 3c0 .07 0 .14-.01.21l2.03.68c.64-1.21 1.82-2.09 3.22-2.32V5.91C9.96 5.57 9 4.4 9 3c0-1.66 1.34-3 3-3s3 1.34 3 3c0 1.4-.96 2.57-2.25 2.91v2.16c1.4.23 2.58 1.11 3.22 2.32l2.03-.68c-.01-.07-.01-.14-.01-.21 0-1.66 1.34-3 3-3s3 1.34 3 3-1.34 3-3 3c-1.06 0-1.98-.55-2.52-1.37l-2.03.68c.2 1.29-.16 2.65-1.09 3.69l1.41 1.77c.38-.17.79-.26 1.23-.26 1.66 0 3 1.34 3 3s-1.34 3-3 3-3-1.34-3-3c0-.68.22-1.3.6-1.8l-1.41-1.77c-1.35.75-3.01.76-4.37 0L8.4 18.2z"/></svg>
<span id="t39" style="position:absolute;left:742.4px;top:562.8px;font-size:31.00px;line-height:31.00px;font-weight:400;color:#4b5563;white-space:nowrap;letter-spacing:1.346px;-webkit-text-stroke:1.55px #4b5563;">Orchestrator</span>
<span id="t40" style="position:absolute;left:741.4px;top:615.2px;font-size:22.00px;line-height:22.00px;font-weight:400;color:#9ca3af;white-space:nowrap;letter-spacing:0.306px;">Completed</span>
<div style="position:absolute;left:742.4px;top:654.5px;width:438.0px;height:8.0px;background:linear-gradient(90deg,#578f8a,#5fa79f);border-radius:4px;"></div>
<div style="position:absolute;left:592.5px;top:716.0px;width:621.5px;height:166.0px;background:#eff6ff;border:2px solid #dbe4ef;border-radius:20px;box-sizing:border-box;"></div>
<div style="position:absolute;left:626.0px;top:755.0px;width:88.0px;height:88.0px;background:linear-gradient(135deg,#4a8882,#4f9f96);border-radius:20px;box-shadow:0 6px 14px rgba(15,95,87,0.18);"></div>
<svg style="position:absolute;left:649.0px;top:778.5px;" width="40.9" height="40.9" viewBox="0 0 24 24"><path fill="#ffffff" d="M23 12l-2.44-2.79.34-3.69-3.61-.82-1.89-3.2L12 2.96 8.6 1.5 6.71 4.69 3.1 5.5l.34 3.7L1 12l2.44 2.79-.34 3.7 3.61.82L8.6 22.5l3.4-1.47 3.4 1.46 1.89-3.19 3.61-.82-.34-3.69L23 12zm-12.91 4.72l-3.8-3.81 1.48-1.48 2.32 2.33 5.85-5.87 1.48 1.48-7.33 7.35z"/></svg>
<span id="t41" style="position:absolute;left:742.4px;top:754.8px;font-size:31.00px;line-height:31.00px;font-weight:400;color:#4b5563;white-space:nowrap;letter-spacing:0.636px;-webkit-text-stroke:1.55px #4b5563;">Data</span>
<span id="t42" style="position:absolute;left:741.4px;top:807.2px;font-size:22.00px;line-height:22.00px;font-weight:400;color:#9ca3af;white-space:nowrap;letter-spacing:-0.033px;">Processing</span>
<div style="position:absolute;left:742.4px;top:846.5px;width:438.0px;height:8.0px;background:linear-gradient(90deg,#578f8a,#5fa79f);border-radius:4px;"></div>
<svg style="position:absolute;left:1151px;top:778.8px" width="42" height="42" viewBox="0 0 42 42"><circle cx="21" cy="21" r="17" fill="none" stroke="#6b9ff0" stroke-width="3" stroke-dasharray="82 25" transform="rotate(-45 21 21)"/></svg>
<div style="position:absolute;left:592.5px;top:908.0px;width:621.5px;height:166.0px;background:#fcfcfd;border:2px solid #eef0f3;border-radius:20px;box-sizing:border-box;"></div>
<div style="position:absolute;left:626.0px;top:947.0px;width:88.0px;height:88.0px;background:linear-gradient(135deg,#6ea39d,#74b2aa);border-radius:20px;box-shadow:0 6px 14px rgba(15,95,87,0.18);"></div>
<svg style="position:absolute;left:649.0px;top:970.3px;" width="41.3" height="41.3" viewBox="0 0 24 24"><path fill="#ffffff" d="M19 3H5c-1.1 0-2 .9-2 2v14c0 1.1.9 2 2 2h14c1.1 0 2-.9 2-2V5c0-1.1-.9-2-2-2zM9 17H7v-5h2v5zm4 0h-2v-3h2v3zm0-5h-2v-2h2v2zm4 5h-2V7h2v10z"/></svg>
<span id="t43" style="position:absolute;left:742.4px;top:946.8px;font-size:31.00px;line-height:31.00px;font-weight:400;color:#6b7280;white-space:nowrap;letter-spacing:1.790px;-webkit-text-stroke:1.55px #6b7280;">Pattern</span>
<span id="t44" style="position:absolute;left:741.4px;top:999.2px;font-size:22.00px;line-height:22.00px;font-weight:400;color:#a3a9b5;white-space:nowrap;letter-spacing:1.522px;">Idle</span>
<div style="position:absolute;left:742.4px;top:1039.0px;width:438.0px;height:8.0px;background:#eceff5;border-radius:4px;"></div>
<div style="position:absolute;left:592.5px;top:1100.0px;width:621.5px;height:166.0px;background:#fcfcfd;border:2px solid #eef0f3;border-radius:20px;box-sizing:border-box;"></div>
<div style="position:absolute;left:626.0px;top:1139.0px;width:88.0px;height:88.0px;background:linear-gradient(135deg,#6ea39d,#74b2aa);border-radius:20px;box-shadow:0 6px 14px rgba(15,95,87,0.18);"></div>
<svg style="position:absolute;left:648.9px;top:1162.5px;" width="40.9" height="40.9" viewBox="0 0 24 24"><path fill="#ffffff" d="M13 8.57c-.79 0-1.43.64-1.43 1.43s.64 1.43 1.43 1.43 1.43-.64 1.43-1.43-.64-1.43-1.43-1.43zM13 3C9.25 3 6.2 5.94 6.02 9.64L4.1 12.2c-.25.33-.01.8.4.8H6v3c0 1.1.9 2 2 2h1v3h7v-4.68c2.36-1.12 4-3.53 4-6.32 0-3.87-3.13-7-7-7zm3 7c0 .13-.01.26-.02.39l.83.66c.08.06.1.16.05.25l-.8 1.39c-.05.09-.16.12-.24.09l-.99-.4c-.21.16-.43.29-.67.39L14 13.83c-.01.1-.1.17-.2.17h-1.6c-.1 0-.18-.07-.2-.17l-.15-1.06c-.25-.1-.47-.23-.68-.39l-.99.4c-.09.03-.2 0-.25-.09l-.8-1.39c-.05-.08-.03-.19.05-.25l.84-.66c-.01-.13-.02-.26-.02-.39s.02-.27.04-.39l-.85-.66c-.08-.06-.1-.16-.05-.26l.8-1.38c.05-.09.15-.12.24-.09l1 .4c.2-.15.43-.29.67-.39L12.17 6.2c.01-.12.1-.2.2-.2h1.6c.1 0 .18.07.19.17l.15 1.06c.24.1.46.23.67.39l1-.4c.09-.03.2 0 .24.09l.8 1.38c.05.09.03.2-.05.26l-.85.66c.03.12.04.25.04.39z"/></svg>
<span id="t45" style="position:absolute;left:742.4px;top:1138.8px;font-size:31.00px;line-height:31.00px;font-weight:400;color:#6b7280;white-space:nowrap;letter-spacing:0.892px;-webkit-text-stroke:1.55px #6b7280;">Risk</span>
<span id="t46" style="position:absolute;left:741.4px;top:1191.2px;font-size:22.00px;line-height:22.00px;font-weight:400;color:#a3a9b5;white-space:nowrap;letter-spacing:1.522px;">Idle</span>
<div style="position:absolute;left:742.4px;top:1231.0px;width:438.0px;height:8.0px;background:#eceff5;border-radius:4px;"></div>
<div style="position:absolute;left:592.5px;top:1292.5px;width:621.5px;height:166.0px;background:#fcfcfd;border:2px solid #eef0f3;border-radius:20px;box-sizing:border-box;"></div>
<div style="position:absolute;left:626.0px;top:1331.5px;width:88.0px;height:88.0px;background:linear-gradient(135deg,#6ea39d,#74b2aa);border-radius:20px;box-shadow:0 6px 14px rgba(15,95,87,0.18);"></div>
<svg style="position:absolute;left:648.5px;top:1354.6px;" width="41.8" height="41.8" viewBox="0 0 24 24"><path fill="#ffffff" d="M12 2C6.48 2 2 6.48 2 12s4.48 10 10 10 10-4.48 10-10S17.52 2 12 2zm6 9.8c0 .27-.05.52-.15.75l-2.46 5.77c-.26.6-.85 1-1.54 1H9.5c-.83 0-1.5-.67-1.5-1.5v-5.4c0-.41.17-.79.44-1.06L12.6 7.2l.75.75c.2.2.31.47.31.75l-.02.23-.63 3.07H17c.55 0 1 .45 1 1v-.2zM6 18c-.55 0-1-.45-1-1v-5.5c0-.55.45-1 1-1s1 .45 1 1V17c0 .55-.45 1-1 1z"/></svg>
<span id="t47" style="position:absolute;left:742.4px;top:1331.3px;font-size:31.00px;line-height:31.00px;font-weight:400;color:#6b7280;white-space:nowrap;letter-spacing:1.287px;-webkit-text-stroke:1.55px #6b7280;">Recommender</span>
<span id="t48" style="position:absolute;left:741.4px;top:1383.7px;font-size:22.00px;line-height:22.00px;font-weight:400;color:#a3a9b5;white-space:nowrap;letter-spacing:1.522px;">Idle</span>
<div style="position:absolute;left:742.4px;top:1423.5px;width:438.0px;height:8.0px;background:#eceff5;border-radius:4px;"></div>
<div style="position:absolute;left:592.5px;top:1485.5px;width:621.5px;height:166.0px;background:#fcfcfd;border:2px solid #eef0f3;border-radius:20px;box-sizing:border-box;"></div>
<div style="position:absolute;left:626.0px;top:1524.5px;width:88.0px;height:88.0px;background:linear-gradient(135deg,#6ea39d,#74b2aa);border-radius:20px;box-shadow:0 6px 14px rgba(15,95,87,0.18);"></div>
<svg style="position:absolute;left:648.5px;top:1547.5px;" width="42.0" height="42.0" viewBox="0 0 24 24"><path fill="#ffffff" d="M12 1L3 5v6c0 5.55 3.84 10.74 9 12 5.16-1.26 9-6.45 9-12V5l-9-4z"/></svg>
<span id="t49" style="position:absolute;left:742.4px;top:1524.3px;font-size:31.00px;line-height:31.00px;font-weight:400;color:#6b7280;white-space:nowrap;letter-spacing:1.222px;-webkit-text-stroke:1.55px #6b7280;">Compliance</span>
<span id="t50" style="position:absolute;left:741.4px;top:1576.7px;font-size:22.00px;line-height:22.00px;font-weight:400;color:#a3a9b5;white-space:nowrap;letter-spacing:1.522px;">Idle</span>
<div style="position:absolute;left:742.4px;top:1616.5px;width:438.0px;height:8.0px;background:#eceff5;border-radius:4px;"></div>
<div style="position:absolute;left:1264.0px;top:450.0px;width:2523.0px;height:2.0px;background:#e5e9f0;"></div>
<div style="position:absolute;left:2137.0px;top:447.5px;width:321.0px;height:5.0px;background:#0f5f57;border-radius:2px;"></div>
<svg style="position:absolute;left:1320.0px;top:377.7px;" width="36.2" height="36.2" viewBox="0 0 24 24"><path fill="#64748b" d="M22 11V3h-7v3H9V3H2v8h7V8h2v10h4v3h7v-8h-7v3h-2V8h2v3z"/></svg>
<span id="t51" style="position:absolute;left:1371.3px;top:382.7px;font-size:30.00px;line-height:30.00px;font-weight:400;color:#64748b;white-space:nowrap;letter-spacing:-0.078px;-webkit-text-stroke:0.45px #64748b;">Workflow Pipeline</span>
<div style="position:absolute;left:1625.5px;top:375.0px;width:84.0px;height:47.0px;background:#eef2f6;border-radius:16px;"></div>
<span id="t52" style="position:absolute;left:1643.9px;top:385.7px;font-size:24.00px;line-height:24.00px;font-weight:400;color:#475569;white-space:nowrap;letter-spacing:0.852px;-webkit-text-stroke:1.2px #475569;">18%</span>
<svg style="position:absolute;left:1798.6px;top:377.5px;" width="36.5" height="36.5" viewBox="0 0 24 24"><path fill="#64748b" d="M8 8H6v7c0 1.1.9 2 2 2h9v-2H8V8zM20 3h-8c-1.1 0-2 .9-2 2v6c0 1.1.9 2 2 2h8c1.1 0 2-.9 2-2V5c0-1.1-.9-2-2-2zm0 8h-8V7h8v4zM4 12H2v7c0 1.1.9 2 2 2h9v-2H4v-7z"/></svg>
<span id="t53" style="position:absolute;left:1849.5px;top:382.7px;font-size:30.00px;line-height:30.00px;font-weight:400;color:#64748b;white-space:nowrap;letter-spacing:-0.428px;-webkit-text-stroke:0.45px #64748b;">Event Stream</span>
<div style="position:absolute;left:2043.8px;top:375.0px;width:45.2px;height:47.0px;background:#eef2f6;border-radius:16px;"></div>
<span id="t54" style="position:absolute;left:2060.5px;top:384.8px;font-size:25.00px;line-height:25.00px;font-weight:400;color:#64748b;white-space:nowrap;letter-spacing:0.000px;-webkit-text-stroke:0.6px #64748b;">8</span>
<svg style="position:absolute;left:2177.4px;top:377.9px;" width="36.6" height="36.6" viewBox="0 0 24 24"><path fill="#0f5f57" d="M12 2C6.48 2 2 6.48 2 12s4.48 10 10 10 10-4.48 10-10S17.52 2 12 2zm4.9 13.49l-1.4 1.4c-.2.2-.51.2-.71 0l-3.41-3.41c-1.22.43-2.64.17-3.62-.81-1.11-1.11-1.3-2.79-.59-4.1l2.35 2.35 1.41-1.41-2.35-2.34c1.32-.7 2.99-.52 4.1.59.98.98 1.24 2.4.81 3.62l3.41 3.41c.19.19.19.51 0 .7z"/></svg>
<span id="t55" style="position:absolute;left:2228.5px;top:382.7px;font-size:30.00px;line-height:30.00px;font-weight:400;color:#0f5f57;white-space:nowrap;letter-spacing:-0.567px;-webkit-text-stroke:0.45px #0f5f57;">Tool Calls</span>
<div style="position:absolute;left:2371.0px;top:375.0px;width:46.0px;height:47.0px;background:#e6eeec;border-radius:16px;"></div>
<span id="t56" style="position:absolute;left:2388.0px;top:384.8px;font-size:25.00px;line-height:25.00px;font-weight:400;color:#0f5f57;white-space:nowrap;letter-spacing:0.000px;-webkit-text-stroke:0.6px #0f5f57;">6</span>
<div style="position:absolute;left:1264px;top:452px;width:2523px;height:1201px;overflow:hidden;background:#f8fafc;">
<div style="position:absolute;left:48.0px;top:34.0px;width:2406.0px;height:245.0px;background:#eff6ff;border:2px solid #4f87d9;border-radius:16px;box-sizing:border-box;"></div>
<div style="position:absolute;left:82.0px;top:63.0px;width:68.0px;height:68.0px;background:#dde8ee;border-radius:14px;"></div>
<svg style="position:absolute;left:96.8px;top:77.7px;" width="37.1" height="37.1" viewBox="0 0 24 24"><path fill="#0f5f57" d="M7.5 5.6L10 7 8.6 4.5 10 2 7.5 3.4 5 2l1.4 2.5L5 7zm12 9.8L17 14l1.4 2.5L17 19l2.5-1.4L22 19l-1.4-2.5L22 14zM22 2l-2.5 1.4L17 2l1.4 2.5L17 7l2.5-1.4L22 7l-1.4-2.5zm-7.63 5.29c-.39-.39-1.02-.39-1.41 0L1.29 18.96c-.39.39-.39 1.02 0 1.41l2.34 2.34c.39.39 1.02.39 1.41 0L16.7 11.05c.39-.39.39-1.02 0-1.41l-2.33-2.35zm-1.03 5.49l-2.12-2.12 2.44-2.44 2.12 2.12-2.44 2.44z"/></svg>
<span id="t57" style="position:absolute;left:175.0px;top:70.0px;font-size:26.00px;line-height:26.00px;font-weight:400;color:#0f172a;white-space:nowrap;letter-spacing:0.463px;-webkit-text-stroke:1.3px #0f172a;">Data Enrichment</span>
<span id="t58" style="position:absolute;left:173.5px;top:112.8px;font-size:24.50px;line-height:24.50px;font-weight:400;color:#4b5563;white-space:nowrap;letter-spacing:0.026px;">Tag data with timestamp, location, student ID, staff ID</span>
<div style="position:absolute;left:82.0px;top:163.0px;width:2338.0px;height:2.0px;background:rgba(226,232,240,0.25);"></div>
<div style="position:absolute;left:82.0px;top:186.0px;width:118.7px;height:44.0px;background:rgba(255,255,255,0.55);border-radius:12px;"></div>
<svg style="position:absolute;left:97.5px;top:196.0px;" width="24.0" height="24.0" viewBox="0 0 24 24"><path fill="#475569" d="M11.99 2C6.47 2 2 6.48 2 12s4.47 10 9.99 10C17.52 22 22 17.52 22 12S17.52 2 11.99 2zM12 20c-4.42 0-8-3.58-8-8s3.58-8 8-8 8 3.58 8 8-3.58 8-8 8zm.5-13H11v6l5.25 3.15.75-1.23-4.5-2.67z"/></svg>
<span id="t59" style="position:absolute;left:129.0px;top:196.4px;font-size:22.00px;line-height:22.00px;font-weight:400;color:#374151;white-space:nowrap;letter-spacing:0.734px;">22ms</span>
<div style="position:absolute;left:218.0px;top:186.0px;width:136.4px;height:44.0px;background:rgba(255,255,255,0.55);border-radius:12px;"></div>
<svg style="position:absolute;left:233.6px;top:196.0px;" width="24.0" height="24.0" viewBox="0 0 24 24"><path fill="#475569" d="M11.99 2C6.47 2 2 6.48 2 12s4.47 10 9.99 10C17.52 22 22 17.52 22 12S17.52 2 11.99 2zM12 20c-4.42 0-8-3.58-8-8s3.58-8 8-8 8 3.58 8 8-3.58 8-8 8zm.5-13H11v6l5.25 3.15.75-1.23-4.5-2.67z"/></svg>
<span id="t60" style="position:absolute;left:266.0px;top:196.4px;font-size:22.00px;line-height:22.00px;font-weight:400;color:#374151;white-space:nowrap;letter-spacing:-0.291px;">-1s ago</span>
<svg style="position:absolute;left:2385.8px;top:61.5px;" width="34.9" height="34.9" viewBox="0 0 24 24"><path fill="#3b82f6" d="M12 4V1L8 5l4 4V6c3.31 0 6 2.69 6 6 0 1.01-.25 1.97-.7 2.8l1.46 1.46C19.54 15.03 20 13.57 20 12c0-4.42-3.58-8-8-8zm0 14c-3.31 0-6-2.69-6-6 0-1.01.25-1.97.7-2.8L5.24 7.74C4.46 8.97 4 10.43 4 12c0 4.42 3.58 8 8 8v3l4-4-4-4v3z"/></svg>
<div style="position:absolute;left:48.0px;top:307.0px;width:2406.0px;height:245.0px;background:#eff6ff;border:2px solid #4f87d9;border-radius:16px;box-sizing:border-box;"></div>
<div style="position:absolute;left:82.0px;top:336.0px;width:68.0px;height:68.0px;background:#dde8ee;border-radius:14px;"></div>
<svg style="position:absolute;left:97.5px;top:352.0px;" width="36.0" height="36.0" viewBox="0 0 24 24"><path fill="#0f5f57" d="M16.54 11L13 7.46l1.41-1.41 2.12 2.12 4.24-4.24 1.41 1.41L16.54 11zM11 7H2v2h9V7zm10 6.41L19.59 12 17 14.59 14.41 12 13 13.41 15.59 16 13 18.59 14.41 20 17 17.41 19.59 20 21 18.59 18.41 16 21 13.41zM11 15H2v2h9v-2z"/></svg>
<span id="t61" style="position:absolute;left:175.0px;top:343.0px;font-size:26.00px;line-height:26.00px;font-weight:400;color:#0f172a;white-space:nowrap;letter-spacing:0.083px;-webkit-text-stroke:1.3px #0f172a;">Business Rule Engine</span>
<span id="t62" style="position:absolute;left:173.5px;top:385.8px;font-size:24.50px;line-height:24.50px;font-weight:400;color:#4b5563;white-space:nowrap;letter-spacing:-0.125px;">Apply behavioral data validation rules</span>
<div style="position:absolute;left:82.0px;top:436.0px;width:2338.0px;height:2.0px;background:rgba(226,232,240,0.25);"></div>
<div style="position:absolute;left:82.0px;top:459.0px;width:118.3px;height:44.0px;background:rgba(255,255,255,0.55);border-radius:12px;"></div>
<svg style="position:absolute;left:97.5px;top:469.0px;" width="24.0" height="24.0" viewBox="0 0 24 24"><path fill="#475569" d="M11.99 2C6.47 2 2 6.48 2 12s4.47 10 9.99 10C17.52 22 22 17.52 22 12S17.52 2 11.99 2zM12 20c-4.42 0-8-3.58-8-8s3.58-8 8-8 8 3.58 8 8-3.58 8-8 8zm.5-13H11v6l5.25 3.15.75-1.23-4.5-2.67z"/></svg>
<span id="t63" style="position:absolute;left:129.0px;top:469.4px;font-size:22.00px;line-height:22.00px;font-weight:400;color:#374151;white-space:nowrap;letter-spacing:0.401px;">38ms</span>
<div style="position:absolute;left:218.0px;top:459.0px;width:127.0px;height:44.0px;background:rgba(255,255,255,0.55);border-radius:12px;"></div>
<svg style="position:absolute;left:233.6px;top:469.0px;" width="24.0" height="24.0" viewBox="0 0 24 24"><path fill="#475569" d="M11.99 2C6.47 2 2 6.48 2 12s4.47 10 9.99 10C17.52 22 22 17.52 22 12S17.52 2 11.99 2zM12 20c-4.42 0-8-3.58-8-8s3.58-8 8-8 8 3.58 8 8-3.58 8-8 8zm.5-13H11v6l5.25 3.15.75-1.23-4.5-2.67z"/></svg>
<span id="t64" style="position:absolute;left:266.0px;top:469.6px;font-size:21.79px;line-height:21.79px;font-weight:400;color:#374151;white-space:nowrap;letter-spacing:-0.640px;">0s ago</span>
<svg style="position:absolute;left:2385.8px;top:334.5px;" width="34.9" height="34.9" viewBox="0 0 24 24"><path fill="#3b82f6" d="M12 4V1L8 5l4 4V6c3.31 0 6 2.69 6 6 0 1.01-.25 1.97-.7 2.8l1.46 1.46C19.54 15.03 20 13.57 20 12c0-4.42-3.58-8-8-8zm0 14c-3.31 0-6-2.69-6-6 0-1.01.25-1.97.7-2.8L5.24 7.74C4.46 8.97 4 10.43 4 12c0 4.42 3.58 8 8 8v3l4-4-4-4v3z"/></svg>
<div style="position:absolute;left:48.0px;top:582.0px;width:2406.0px;height:245.0px;background:#ffffff;border:2px solid #e9edf2;border-left:5px solid #1fb37f;border-radius:16px;box-sizing:border-box;"></div>
<div style="position:absolute;left:85.0px;top:611.0px;width:68.0px;height:68.0px;background:#e8f0ef;border-radius:14px;"></div>
<svg style="position:absolute;left:100.1px;top:626.5px;" width="37.0" height="37.0" viewBox="0 0 24 24"><path fill="#0f5f57" d="M17 3H5c-1.11 0-2 .9-2 2v14c0 1.1.89 2 2 2h14c1.1 0 2-.9 2-2V7l-4-4zm-5 16c-1.66 0-3-1.34-3-3s1.34-3 3-3 3 1.34 3 3-1.34 3-3 3zm3-10H5V5h10v4z"/></svg>
<span id="t65" style="position:absolute;left:178.0px;top:618.0px;font-size:26.00px;line-height:26.00px;font-weight:400;color:#0f172a;white-space:nowrap;letter-spacing:0.598px;-webkit-text-stroke:1.3px #0f172a;">Database Insert</span>
<span id="t66" style="position:absolute;left:176.5px;top:660.8px;font-size:24.50px;line-height:24.50px;font-weight:400;color:#4b5563;white-space:nowrap;letter-spacing:-0.063px;">Store validated data in time-series database</span>
<div style="position:absolute;left:85.0px;top:711.0px;width:2335.0px;height:2.0px;background:#eef1f5;"></div>
<div style="position:absolute;left:85.0px;top:734.0px;width:119.0px;height:44.0px;background:#f5f7fa;border-radius:12px;"></div>
<svg style="position:absolute;left:100.5px;top:744.0px;" width="24.0" height="24.0" viewBox="0 0 24 24"><path fill="#475569" d="M11.99 2C6.47 2 2 6.48 2 12s4.47 10 9.99 10C17.52 22 22 17.52 22 12S17.52 2 11.99 2zM12 20c-4.42 0-8-3.58-8-8s3.58-8 8-8 8 3.58 8 8-3.58 8-8 8zm.5-13H11v6l5.25 3.15.75-1.23-4.5-2.67z"/></svg>
<span id="t67" style="position:absolute;left:132.0px;top:744.4px;font-size:22.00px;line-height:22.00px;font-weight:400;color:#374151;white-space:nowrap;letter-spacing:0.734px;">18ms</span>
<div style="position:absolute;left:221.0px;top:734.0px;width:142.6px;height:44.0px;background:#f5f7fa;border-radius:12px;"></div>
<svg style="position:absolute;left:236.6px;top:744.0px;" width="24.0" height="24.0" viewBox="0 0 24 24"><path fill="#475569" d="M11.99 2C6.47 2 2 6.48 2 12s4.47 10 9.99 10C17.52 22 22 17.52 22 12S17.52 2 11.99 2zM12 20c-4.42 0-8-3.58-8-8s3.58-8 8-8 8 3.58 8 8-3.58 8-8 8zm.5-13H11v6l5.25 3.15.75-1.23-4.5-2.67z"/></svg>
<span id="t68" style="position:absolute;left:269.0px;top:744.4px;font-size:22.00px;line-height:22.00px;font-weight:400;color:#374151;white-space:nowrap;letter-spacing:0.091px;">14s ago</span>
<svg style="position:absolute;left:2384.4px;top:611.0px;" width="36.6" height="36.6" viewBox="0 0 24 24"><path fill="#10b981" d="M12 2C6.48 2 2 6.48 2 12s4.48 10 10 10 10-4.48 10-10S17.52 2 12 2zm-2 15l-5-5 1.41-1.41L10 14.17l7.59-7.59L19 8l-9 9z"/></svg>
<div style="position:absolute;left:48.0px;top:857.5px;width:2406.0px;height:245.0px;background:#ffffff;border:2px solid #e9edf2;border-left:5px solid #1fb37f;border-radius:16px;box-sizing:border-box;"></div>
<div style="position:absolute;left:85.0px;top:886.5px;width:68.0px;height:68.0px;background:#e8f0ef;border-radius:14px;"></div>
<svg style="position:absolute;left:101.0px;top:902.3px;" width="36.5" height="36.5" viewBox="0 0 24 24"><path fill="#0f5f57" d="M20 3H4c-1.1 0-2 .9-2 2v14c0 1.1.9 2 2 2h16c1.1 0 2-.9 2-2V5c0-1.1-.9-2-2-2zM10 17H5v-2h5v2zm0-4H5v-2h5v2zm0-4H5V7h5v2zm4.82 6L12 12.16l1.41-1.41 1.41 1.42L17.99 9l1.42 1.42L14.82 15z"/></svg>
<span id="t69" style="position:absolute;left:178.0px;top:893.5px;font-size:26.00px;line-height:26.00px;font-weight:400;color:#0f172a;white-space:nowrap;letter-spacing:0.492px;-webkit-text-stroke:1.3px #0f172a;">Data Validation Service</span>
<span id="t70" style="position:absolute;left:176.5px;top:936.3px;font-size:24.50px;line-height:24.50px;font-weight:400;color:#4b5563;white-space:nowrap;letter-spacing:-0.315px;">Validate ABC log schema compliance</span>
<div style="position:absolute;left:85.0px;top:986.5px;width:2335.0px;height:2.0px;background:#eef1f5;"></div>
<div style="position:absolute;left:85.0px;top:1009.5px;width:119.5px;height:44.0px;background:#f5f7fa;border-radius:12px;"></div>
<svg style="position:absolute;left:100.5px;top:1019.5px;" width="24.0" height="24.0" viewBox="0 0 24 24"><path fill="#475569" d="M11.99 2C6.47 2 2 6.48 2 12s4.47 10 9.99 10C17.52 22 22 17.52 22 12S17.52 2 11.99 2zM12 20c-4.42 0-8-3.58-8-8s3.58-8 8-8 8 3.58 8 8-3.58 8-8 8zm.5-13H11v6l5.25 3.15.75-1.23-4.5-2.67z"/></svg>
<span id="t71" style="position:absolute;left:132.0px;top:1019.9px;font-size:22.00px;line-height:22.00px;font-weight:400;color:#374151;white-space:nowrap;letter-spacing:0.734px;">28ms</span>
<div style="position:absolute;left:221.0px;top:1009.5px;width:141.4px;height:44.0px;background:#f5f7fa;border-radius:12px;"></div>
<svg style="position:absolute;left:236.6px;top:1019.5px;" width="24.0" height="24.0" viewBox="0 0 24 24"><path fill="#475569" d="M11.99 2C6.47 2 2 6.48 2 12s4.47 10 9.99 10C17.52 22 22 17.52 22 12S17.52 2 11.99 2zM12 20c-4.42 0-8-3.58-8-8s3.58-8 8-8 8 3.58 8 8-3.58 8-8 8zm.5-13H11v6l5.25 3.15.75-1.23-4.5-2.67z"/></svg>
<span id="t72" style="position:absolute;left:269.0px;top:1019.9px;font-size:22.00px;line-height:22.00px;font-weight:400;color:#374151;white-space:nowrap;letter-spacing:-0.109px;">14s ago</span>
<svg style="position:absolute;left:2384.4px;top:886.5px;" width="36.6" height="36.6" viewBox="0 0 24 24"><path fill="#10b981" d="M12 2C6.48 2 2 6.48 2 12s4.48 10 10 10 10-4.48 10-10S17.52 2 12 2zm-2 15l-5-5 1.41-1.41L10 14.17l7.59-7.59L19 8l-9 9z"/></svg>
<div style="position:absolute;left:48.0px;top:1133.0px;width:2406.0px;height:245.0px;background:#ffffff;border:2px solid #e9edf2;border-left:5px solid #1fb37f;border-radius:16px;box-sizing:border-box;"></div>
<div style="position:absolute;left:85.0px;top:1162.0px;width:68.0px;height:68.0px;background:#e8f0ef;border-radius:14px;"></div>
<svg style="position:absolute;left:100.5px;top:1177.7px;" width="36.6" height="36.6" viewBox="0 0 24 24"><path fill="#0f5f57" d="M2 20h20v-4H2v4zm2-3h2v2H4v-2zM2 4v4h20V4H2zm4 3H4V5h2v2zm-4 7h20v-4H2v4zm2-3h2v2H4v-2z"/></svg>
<span id="t73" style="position:absolute;left:178.0px;top:1169.0px;font-size:26.00px;line-height:26.00px;font-weight:400;color:#0f172a;white-space:nowrap;letter-spacing:0.237px;-webkit-text-stroke:1.3px #0f172a;">Database Query</span>
<span id="t74" style="position:absolute;left:176.5px;top:1211.8px;font-size:24.50px;line-height:24.50px;font-weight:400;color:#4b5563;white-space:nowrap;letter-spacing:0.000px;">Query historical data</span>
<div style="position:absolute;left:85.0px;top:1262.0px;width:2335.0px;height:2.0px;background:#eef1f5;"></div>
<div style="position:absolute;left:85.0px;top:1285.0px;width:119.0px;height:44.0px;background:#f5f7fa;border-radius:12px;"></div>
<svg style="position:absolute;left:100.5px;top:1295.0px;" width="24.0" height="24.0" viewBox="0 0 24 24"><path fill="#475569" d="M11.99 2C6.47 2 2 6.48 2 12s4.47 10 9.99 10C17.52 22 22 17.52 22 12S17.52 2 11.99 2zM12 20c-4.42 0-8-3.58-8-8s3.58-8 8-8 8 3.58 8 8-3.58 8-8 8zm.5-13H11v6l5.25 3.15.75-1.23-4.5-2.67z"/></svg>
<span id="t75" style="position:absolute;left:132.0px;top:1295.4px;font-size:22.00px;line-height:22.00px;font-weight:400;color:#374151;white-space:nowrap;letter-spacing:0.734px;">12ms</span>
<div style="position:absolute;left:221.0px;top:1285.0px;width:142.0px;height:44.0px;background:#f5f7fa;border-radius:12px;"></div>
<svg style="position:absolute;left:236.6px;top:1295.0px;" width="24.0" height="24.0" viewBox="0 0 24 24"><path fill="#475569" d="M11.99 2C6.47 2 2 6.48 2 12s4.47 10 9.99 10C17.52 22 22 17.52 22 12S17.52 2 11.99 2zM12 20c-4.42 0-8-3.58-8-8s3.58-8 8-8 8 3.58 8 8-3.58 8-8 8zm.5-13H11v6l5.25 3.15.75-1.23-4.5-2.67z"/></svg>
<span id="t76" style="position:absolute;left:269.0px;top:1295.4px;font-size:22.00px;line-height:22.00px;font-weight:400;color:#374151;white-space:nowrap;letter-spacing:-0.009px;">15s ago</span>
<svg style="position:absolute;left:2384.4px;top:1162.0px;" width="36.6" height="36.6" viewBox="0 0 24 24"><path fill="#10b981" d="M12 2C6.48 2 2 6.48 2 12s4.48 10 10 10 10-4.48 10-10S17.52 2 12 2zm-2 15l-5-5 1.41-1.41L10 14.17l7.59-7.59L19 8l-9 9z"/></svg>
<div style="position:absolute;left:2503.0px;top:0.0px;width:20.0px;height:1201.0px;background:#e8eeee;"></div>
<div style="position:absolute;left:2507.0px;top:24.6px;width:11.0px;height:820.0px;background:#8fb3ae;border-radius:6px;"></div>
<svg style="position:absolute;left:2505px;top:6px" width="16" height="12" viewBox="0 0 16 12"><path d="M8 2 L14 10 L2 10 Z" fill="#8fb3ae" stroke="#8fb3ae" stroke-width="2" stroke-linejoin="round"/></svg>
<svg style="position:absolute;left:2505px;top:1183px" width="16" height="12" viewBox="0 0 16 12"><path d="M2 2 L14 2 L8 10 Z" fill="#8fb3ae" stroke="#8fb3ae" stroke-width="2" stroke-linejoin="round"/></svg>
</div>
<div style="position:absolute;left:2013.5px;top:2151.0px;width:56.0px;height:5.0px;background:#0f5f57;border-radius:0 0 3px 3px;"></div>
</body></html>
